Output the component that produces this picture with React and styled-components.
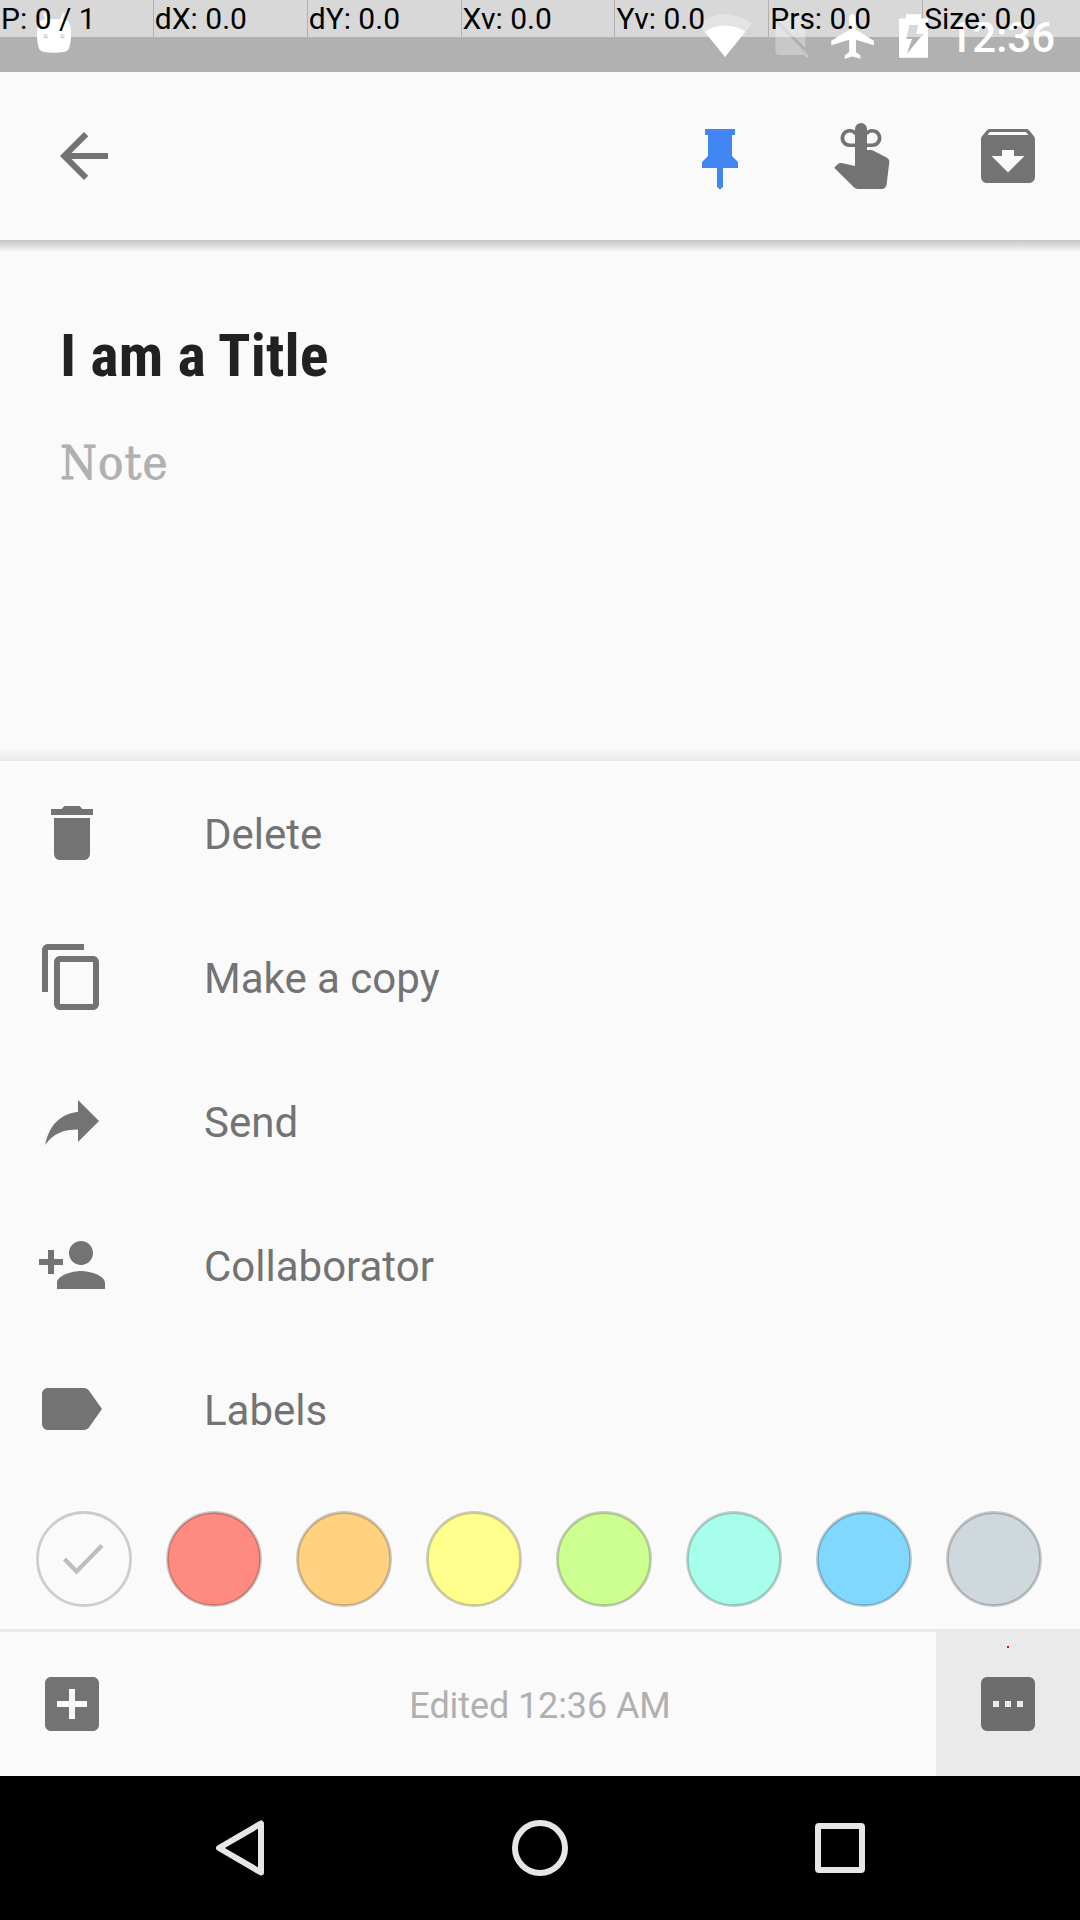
import React from "react";
import styled, { createGlobalStyle } from "styled-components";

const INK = "#737373";
const SURFACE = "#fafafa";

const GlobalStyle = createGlobalStyle`
  html, body { margin: 0; padding: 0; background: ${SURFACE}; }
  *, *::before, *::after { box-sizing: border-box; }
  svg { display: block; flex: none; }
  body { font-family: Roboto, "Noto Sans", sans-serif; }
  button { border: 0; padding: 0; margin: 0; background: none; font: inherit; color: inherit; }
`;

const Screen = styled.div`
  width: 1080px;
  height: 1920px;
  display: flex;
  flex-direction: column;
  background: ${SURFACE};
  overflow: hidden;
`;

const StatusBar = styled.header`
  position: relative;
  flex: none;
  height: 72px;
  padding: 0 25px 0 37px;
  display: flex;
  justify-content: space-between;
  background: #b1b1b1;
  color: #fff;
`;

const StatusTray = styled.div`
  display: flex;
  align-items: flex-start;
`;

const StatusSlot = styled.div`
  width: ${(p) => p.$width}px;
  margin-right: ${(p) => p.$gap}px;
  opacity: ${(p) => p.$opacity || 1};
`;

const Clock = styled.span`
  font-size: 42px;
  font-weight: 500;
  line-height: 49px;
  padding-top: 13px;
  white-space: nowrap;
`;

const PointerOverlay = styled.div`
  position: absolute;
  inset: 0 0 auto 0;
  height: 37px;
  display: flex;
  gap: 1px;
`;

const PointerCell = styled.div`
  width: ${(p) => p.$width}px;
  padding-left: 1px;
  background: rgba(255, 255, 255, 0.5);
  color: #000;
  font-size: 30px;
  line-height: 38px;
  white-space: nowrap;
`;

const Toolbar = styled.nav`
  position: relative;
  z-index: 1;
  flex: none;
  height: 168px;
  padding: 48px 36px 48px 48px;
  display: flex;
  align-items: center;
  background: ${SURFACE};
  color: ${INK};
  &::after {
    content: "";
    position: absolute;
    left: 0;
    right: 0;
    top: 100%;
    height: 12px;
    background: linear-gradient(#c6c6c6, #dcdcdc 45%, ${SURFACE});
  }
`;

const ToolbarActions = styled.div`
  margin-left: auto;
  display: flex;
  gap: 72px;
`;

const IconButton = styled.button`
  width: 72px;
  height: 72px;
  color: ${(p) => p.$color || "inherit"};
`;

const Note = styled.main`
  flex: none;
  height: 521px;
  padding: 81px 60px 0;
  position: relative;
  &::after {
    content: "";
    position: absolute;
    left: 0;
    right: 0;
    bottom: 0;
    height: 12px;
    background: linear-gradient(${SURFACE}, #e8e8e8);
  }
`;

const Title = styled.h1`
  margin: 0;
  font-family: "Roboto Condensed", Roboto, sans-serif;
  font-stretch: condensed;
  font-size: 60px;
  font-weight: 700;
  line-height: 70px;
  letter-spacing: 0.15px;
  color: #212121;
`;

const NoteBody = styled.p`
  margin: 40px 0 0;
  font-family: "Roboto Slab", "DejaVu Serif Condensed", "DejaVu Serif", serif;
  font-stretch: semi-condensed;
  font-size: 47px;
  line-height: 63px;
  letter-spacing: 1px;
  -webkit-text-stroke: 0.8px #b0b0b0;
  color: #b0b0b0;
`;

const Menu = styled.ul`
  list-style: none;
  margin: 0;
  padding: 0;
  flex: none;
`;

const MenuItem = styled.li`
  height: 144px;
  padding-left: 36px;
  display: flex;
  align-items: center;
  gap: 96px;
  color: ${INK};
  font-size: 42px;
  line-height: 50px;
`;

const MenuLabel = styled.span`
  padding-top: 4px;
`;

const Palette = styled.div`
  flex: none;
  height: 148px;
  padding: 8px 38px 0 36px;
  display: flex;
  justify-content: space-between;
  align-items: center;
`;

const BottomBar = styled.footer`
  flex: none;
  height: 147px;
  display: grid;
  grid-template-columns: 144px 1fr 144px;
  color: ${INK};
`;

const BarCell = styled.div`
  position: relative;
  padding-top: ${(p) => (p.$active ? 3 : 0)}px;
  border-top: ${(p) => (p.$active ? "0" : "3px solid #ebebeb")};
  background: ${(p) => (p.$active ? "#eaeaea" : SURFACE)};
  color: ${(p) => (p.$active ? "#6c6c6c" : INK)};
  display: flex;
  align-items: center;
  justify-content: center;
`;

const Edited = styled.span`
  font-size: 36px;
  line-height: 42px;
  padding-top: 3px;
  letter-spacing: -0.1px;
  color: #b0b0b0;
`;

const TouchPoint = styled.span`
  position: absolute;
  left: 71px;
  top: 17px;
  width: 2px;
  height: 2px;
  background: #f00;
`;

const SystemNav = styled.nav`
  flex: none;
  height: 144px;
  padding: 0 90px;
  display: grid;
  grid-template-columns: repeat(3, 1fr);
  place-items: center;
  background: #000;
`;

const ICONS = {
  back: <path d="M60 33H23.5l16.8-16.8L36 12 12 36l24 24 4.2-4.2L23.5 39H60z" />,
  pin: <path d="M21 9H51V15H48V36L54 42V48H39V67L36 69.5L33 67V48H18V42L24 36V15H21Z" />,
  finger: (
    <>
      <path d="M27 9a6 6 0 0 1 12 0V30H42.500q1.500 0 3 .8L58.500 37.600Q61.500 39.200 61.300 42L58.700 64Q58 69 53.500 69H30.500Q28 69 26.200 67.500L6.200 47.700L10 44Q11.300 42.700 13.500 43.100L27 46Z" />
      <path
        d="M28 25.300H21.800a7.300 7.300 0 1 1 6-11.300M38 25.300H44.200a7.300 7.300 0 1 0 -6 -11.300"
        fill="none"
        stroke="currentColor"
        strokeWidth="3.600"
      />
    </>
  ),
  archive: (
    <g transform="scale(3)">
      <path d="M20.54 5.23l-1.39-1.68C18.88 3.21 18.47 3 18 3H6c-.47 0-.88.21-1.16.55L3.46 5.23C3.17 5.57 3 6.02 3 6.5V19c0 1.100.9 2 2 2h14c1.100 0 2-.9 2-2V6.500c0-.48-.17-.93-.46-1.270zM12 17.500L6.500 12H10v-2h4v2h3.500L12 17.500zM5.120 5l.81-1h12l.94 1H5.120z" />
    </g>
  ),
  remove: (
    <g transform="scale(3)">
      <path d="M6 19c0 1.100.9 2 2 2h8c1.100 0 2-.9 2-2V7H6v12zM19 4h-3.500l-1-1h-5l-1 1H5v2h14V4z" />
    </g>
  ),
  copy: (
    <g transform="scale(3)">
      <path d="M16 1H4c-1.100 0-2 .9-2 2v14h2V3h12V1zm3 4H8c-1.100 0-2 .9-2 2v14c0 1.100.9 2 2 2h11c1.100 0 2-.9 2-2V7c0-1.100-.9-2-2-2zm0 16H8V7h11v14z" />
    </g>
  ),
  send: <path d="M42 15L63 36L42 57V44.500C27.500 44.500 17 48.500 9.200 60C12.500 43.500 21 29.500 42 26.700Z" />,
  person: (
    <g transform="scale(3)">
      <path d="M15 12c2.210 0 4-1.790 4-4s-1.790-4-4-4-4 1.790-4 4 1.790 4 4 4zm-9-2V7H4v3H1v2h3v3h2v-3h3v-2H6zm9 4c-2.670 0-8 1.340-8 4v2h16v-2c0-2.660-5.330-4-8-4z" />
    </g>
  ),
  label: (
    <g transform="scale(3)">
      <path d="M17.630 5.840C17.270 5.330 16.670 5 16 5H4C2.900 5 2 5.900 2 7v10c0 1.100.9 2 2 2h12c.67 0 1.270-.33 1.630-.84L22 12l-4.370-6.160z" />
    </g>
  ),
  add: (
    <g transform="scale(3)">
      <path d="M19 3H5c-1.110 0-2 .9-2 2v14c0 1.100.89 2 2 2h14c1.100 0 2-.9 2-2V5c0-1.100-.9-2-2-2zm-2 10h-4v4h-2v-4H7v-2h4V7h2v4h4v2z" />
    </g>
  ),
  more: (
    <path
      fillRule="evenodd"
      d="M15 9H57a6 6 0 0 1 6 6V57a6 6 0 0 1-6 6H15a6 6 0 0 1-6-6V15a6 6 0 0 1 6-6ZM21 33V39H27V33ZM33 33V39H39V33ZM45 33V39H51V33Z"
    />
  ),
};

const Icon = ({ name }) => (
  <svg width="72" height="72" viewBox="0 0 72 72" fill="currentColor" aria-hidden="true">
    {ICONS[name]}
  </svg>
);

const Swatch = ({ color, selected }) => (
  <svg width="96" height="96" viewBox="0 0 96 96" aria-label={selected ? "Selected color" : "Color"}>
    <circle
      cx="48"
      cy="48"
      r="46.5"
      fill={color}
      stroke={selected ? "#cdcdcd" : "rgba(0,0,0,0.2)"}
      strokeWidth="2.8"
    />
    {selected && <path d="M28.500 48L40.500 60.500L66 34.500" fill="none" stroke="#bdbdbd" strokeWidth="4.200" />}
  </svg>
);

const pointerCells = ["P: 0 / 1", "dX: 0.0", "dY: 0.0", "Xv: 0.0", "Yv: 0.0", "Prs: 0.0", "Size: 0.0"];

const menuItems = [
  { icon: "remove", label: "Delete" },
  { icon: "copy", label: "Make a copy" },
  { icon: "send", label: "Send" },
  { icon: "person", label: "Collaborator" },
  { icon: "label", label: "Labels" },
];

const noteColors = [SURFACE, "#ff8a80", "#ffd180", "#ffff8d", "#ccff90", "#a7ffeb", "#80d8ff", "#cfd8dc"];

export default function App() {
  return (
    <>
      <GlobalStyle />
      <Screen>
        <StatusBar>
          <svg width="34" height="60" viewBox="0 0 34 60" fill="#fff" aria-hidden="true">
            <path d="M7 13l3 7M27 13l-3 7" stroke="#fff" strokeWidth="2" />
            <path
              fillRule="evenodd"
              d="M5 20Q17 18 29 20Q34 21 34 34Q34 46 31 50Q29 52.700 17 52.700Q5 52.700 3 50Q0 46 0 34Q0 21 5 20Z"
            />
            <g fill="#c9c9c9">
              <circle cx="8.600" cy="36" r="2.400" />
              <circle cx="25.400" cy="36" r="2.400" />
            </g>
          </svg>
          <StatusTray>
            <StatusSlot $width={54} $gap={18}>
              <svg width="54" height="60" viewBox="0 0 54 60" fill="#fff" aria-hidden="true">
                <path fillOpacity="0.3" d="M0 23.500Q27 5 54 23.500L27 57Z" />
                <path d="M6.500 31.600Q27 19.500 47.500 31.600L27 57Z" />
              </svg>
            </StatusSlot>
            <StatusSlot $width={40} $gap={21} $opacity={0.3}>
              <svg width="40" height="60" viewBox="0 0 40 60" fill="#fff" aria-hidden="true">
                <path d="M5.500 25L35.500 53Q34.500 55 32 55H9Q5.500 55 5.500 51Z" />
                <path d="M14 16H32Q35.500 16 35.500 20V48L9 21.500Z" />
                <path d="M1.500 20.500L38 57" stroke="#fff" strokeWidth="3" />
              </svg>
            </StatusSlot>
            <StatusSlot $width={43} $gap={25}>
              <svg width="43" height="60" viewBox="0 0 43 60" fill="#fff" aria-hidden="true">
                <g transform="translate(-4.200 9.500) scale(2.240)">
                  <path d="M21 16v-2l-8-5V3.500c0-.83-.67-1.500-1.500-1.500S10 2.670 10 3.500V9l-8 5v2l8-2.500V19l-2 1.500V22l3.500-1 3.500 1v-1.500L13 19v-5.500l8 2.500z" />
                </g>
              </svg>
            </StatusSlot>
            <StatusSlot $width={29} $gap={20}>
              <svg width="29" height="60" viewBox="0 0 29 60" fill="#fff" aria-hidden="true">
                <path
                  fillRule="evenodd"
                  d="M7 14.300H22V18.500H29V57.700H0V18.500H7ZM10.300 25L7.300 39H13L7.800 54L24.200 34H17L19.300 25Z"
                />
              </svg>
            </StatusSlot>
            <Clock>12:36</Clock>
          </StatusTray>
          <PointerOverlay>
            {pointerCells.map((text, i) => (
              <PointerCell key={text} $width={i === pointerCells.length - 1 ? 157 : 153}>
                {text}
              </PointerCell>
            ))}
          </PointerOverlay>
        </StatusBar>

        <Toolbar>
          <IconButton aria-label="Back"><Icon name="back" /></IconButton>
          <ToolbarActions>
            <IconButton aria-label="Unpin" $color="#4285f4"><Icon name="pin" /></IconButton>
            <IconButton aria-label="Remind me"><Icon name="finger" /></IconButton>
            <IconButton aria-label="Archive"><Icon name="archive" /></IconButton>
          </ToolbarActions>
        </Toolbar>

        <Note>
          <Title>I am a Title</Title>
          <NoteBody>Note</NoteBody>
        </Note>

        <Menu>
          {menuItems.map((item) => (
            <MenuItem key={item.icon}>
              <Icon name={item.icon} />
              <MenuLabel>{item.label}</MenuLabel>
            </MenuItem>
          ))}
        </Menu>

        <Palette>
          {noteColors.map((color, i) => (
            <Swatch key={color} color={color} selected={i === 0} />
          ))}
        </Palette>

        <BottomBar>
          <BarCell><Icon name="add" /></BarCell>
          <BarCell><Edited>Edited 12:36 AM</Edited></BarCell>
          <BarCell $active>
            <Icon name="more" />
            <TouchPoint />
          </BarCell>
        </BottomBar>

        <SystemNav>
          <svg width="60" height="60" viewBox="0 0 60 60" fill="none" stroke="#e6e6e6" strokeWidth="6" aria-hidden="true">
            <path strokeLinejoin="round" d="M51 5.500V54.500L9 30Z" />
          </svg>
          <svg width="60" height="60" viewBox="0 0 60 60" fill="none" stroke="#e6e6e6" strokeWidth="6" aria-hidden="true">
            <circle cx="30" cy="30" r="25" />
          </svg>
          <svg width="60" height="60" viewBox="0 0 60 60" fill="none" stroke="#e6e6e6" strokeWidth="6" aria-hidden="true">
            <rect x="8" y="8" width="44" height="44" rx="1" strokeLinejoin="round" />
          </svg>
        </SystemNav>
      </Screen>
    </>
  );
}
